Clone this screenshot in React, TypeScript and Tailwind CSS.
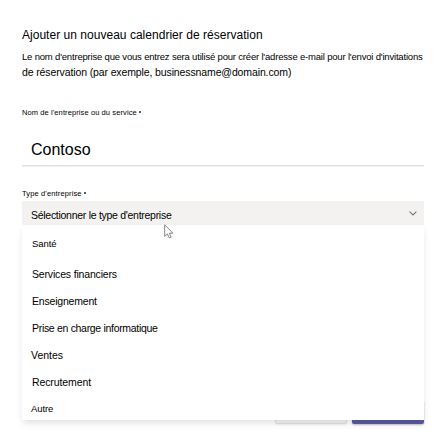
const options = [
  { label: "Santé", style: "mb-1 h-[27px] pl-[10px] pt-[2px] text-[9.5px] tracking-[-0.05px]" },
  { label: "Services financiers", style: "h-[27px] pl-[10px] pt-px text-[10.5px] tracking-[-0.17px]" },
  { label: "Enseignement", style: "h-[27px] pl-[10px] pt-px text-[10.5px] tracking-[-0.19px]" },
  { label: "Prise en charge informatique", style: "h-[27px] pl-[10px] pt-px text-[10.5px] tracking-[-0.31px]" },
  { label: "Ventes", style: "h-[27px] pl-[9px] pt-px text-[10.5px] tracking-[0px]" },
  { label: "Recrutement", style: "h-[27px] pl-[10px] pt-px text-[10.5px] tracking-[-0.1px]" },
  { label: "Autre", style: "h-6 pl-[9px] pt-[2px] text-[9.5px] tracking-[-0.1px]" },
];

function Required() {
  return <span className="ml-[2px] inline-block size-[2px] rounded-full bg-[#222] align-[2px]" />;
}

function Pointer() {
  return (
    <svg className="absolute left-[142px] top-[23px] z-20" width="11" height="16" viewBox="0 0 11 16">
      <path d="M.7.8v11.6l2.7-2.5 1.8 4 1.9-.8-1.8-3.9h3.6z" fill="#fff" stroke="#77777d" strokeWidth=".9" />
    </svg>
  );
}

export default function App() {
  return (
    <main className="h-[448px] w-[446px] overflow-hidden bg-white pl-[22px] pt-[27px] font-['Liberation_Sans',Arial,sans-serif] text-black">
      <div className="flex w-[402px] flex-col whitespace-nowrap">
        <h1 className="h-4 text-[12px] leading-4 tracking-[0.025px]">Ajouter un nouveau calendrier de réservation</h1>
        <p className="mt-[6px] h-4 text-[9.5px] leading-4 tracking-[-0.185px]">Le nom d'entreprise que vous entrez sera utilisé pour créer l'adresse e-mail pour l'envoi d'invitations</p>
        <p className="h-4 text-[10.5px] leading-[14px] tracking-[-0.12px]">de réservation (par exemple, businessname@domain.com)</p>

        <label className="mt-[27px] h-[10px] text-[7.5px] leading-[10px] tracking-[0.1px]">Nom de l'entreprise ou du service<Required /></label>
        <div className="mt-4 flex h-8 items-center border-b border-[#dededd] pl-[9px] pt-px text-[16px] shadow-[0_1px_0_#f3f3f3]">Contoso</div>

        <label className="mt-[23px] h-[10px] text-[7.5px] leading-[10px] tracking-[0.14px]">Type d'entreprise<Required /></label>
        <div className="relative mt-[2px] flex h-6 items-center justify-between bg-[#f3f2f1] pl-[9px] pr-[7px]">
          <span className="pt-[3px] text-[10.5px] leading-4 tracking-[-0.28px]">Sélectionner le type d'entreprise</span>
          <svg width="8" height="5" viewBox="0 0 8 5" fill="none" stroke="#777" strokeWidth="1.1">
            <path d="M.6.6 4 4 7.4.6" />
          </svg>
          <ul className="absolute left-0 top-6 z-10 flex h-[195px] w-full flex-col bg-white pt-[5px] shadow-[0_4px_7px_-1px_rgba(0,0,0,0.12)]">
            {options.map((o) => (
              <li key={o.label} className={`flex shrink-0 items-center ${o.style}`}>{o.label}</li>
            ))}
          </ul>
          <Pointer />
        </div>

        <div className="mt-[175px] flex justify-end gap-[5px]">
          <div className="h-6 w-[72px] rounded-[2px] border border-[#dedede] bg-[#f4f4f4] shadow-[0_1px_2px_rgba(0,0,0,0.06)]" />
          <div className="h-6 w-[72px] rounded-[2px] bg-[#5b5aa0] shadow-[0_1px_2px_rgba(0,0,0,0.25)]" />
        </div>
      </div>
    </main>
  );
}
